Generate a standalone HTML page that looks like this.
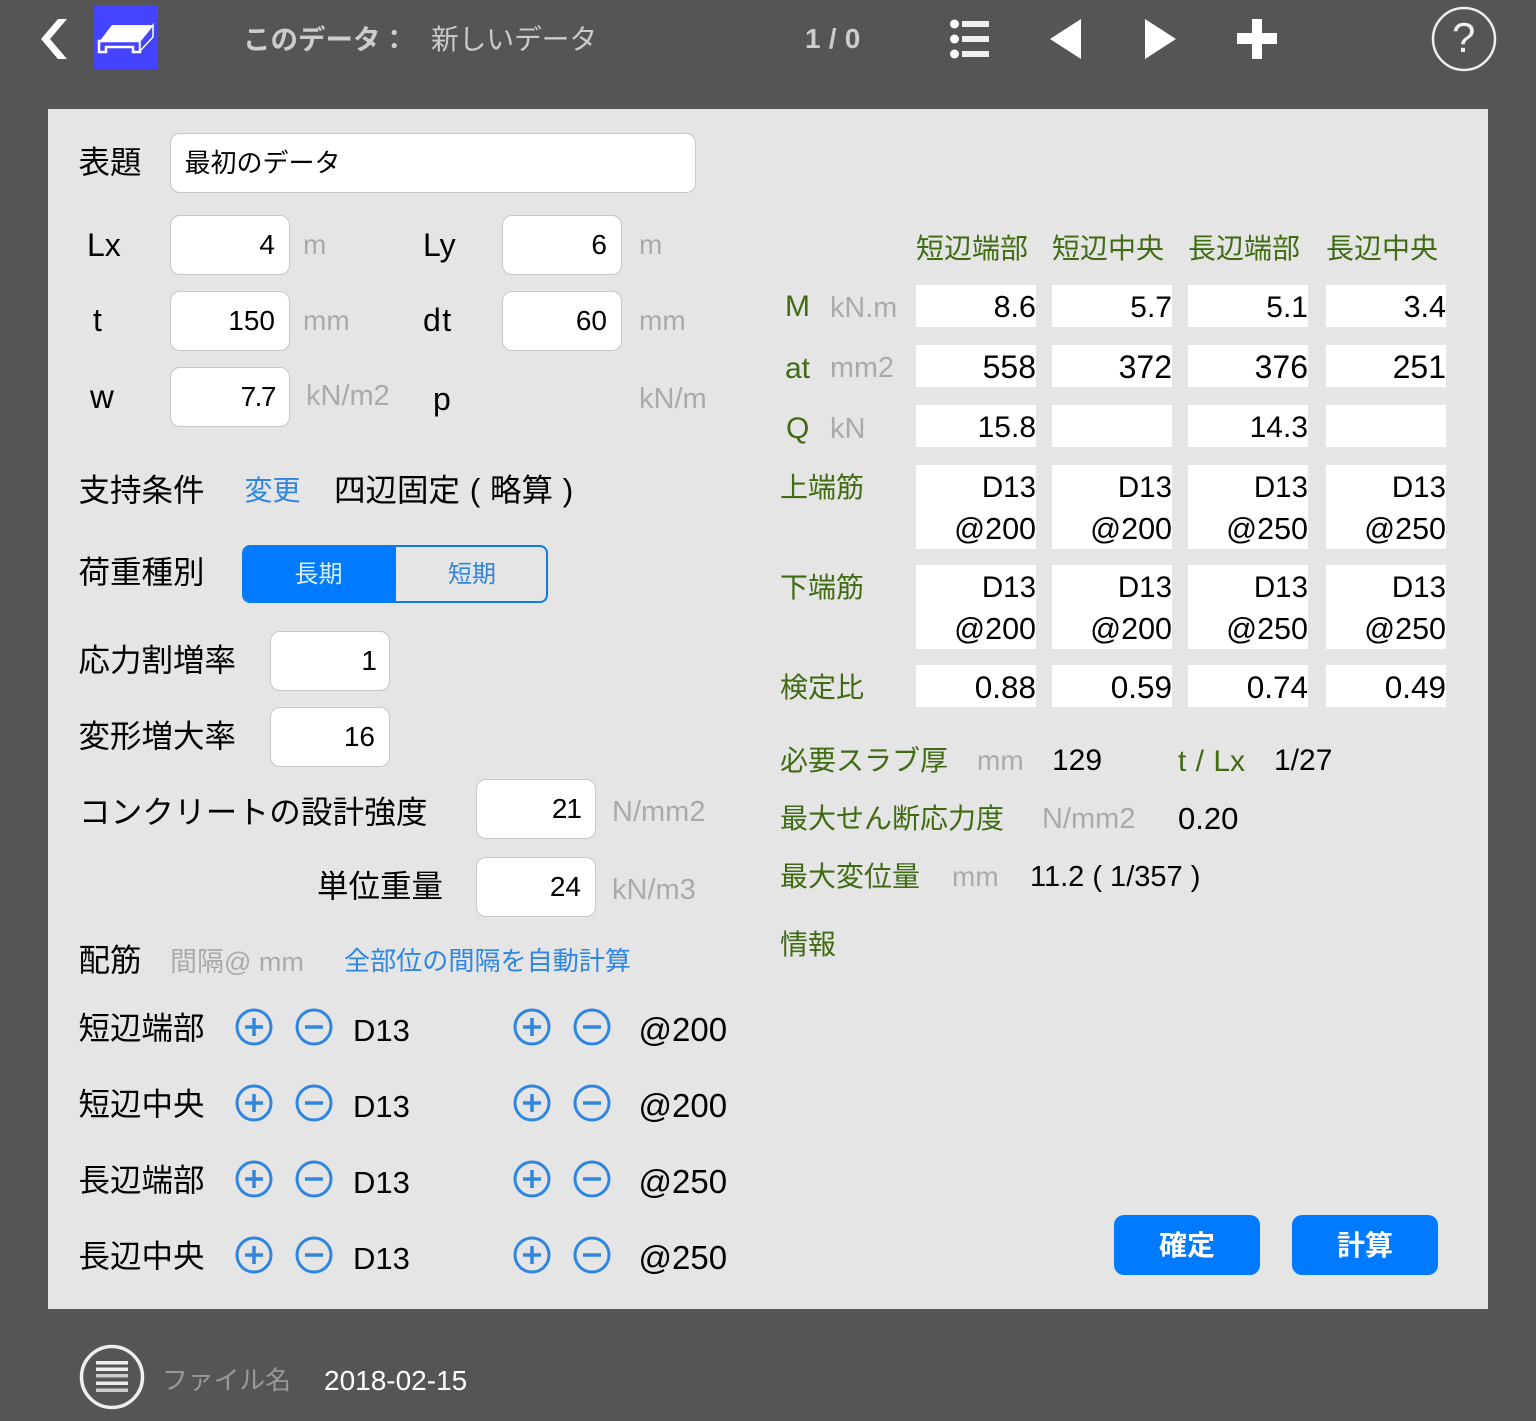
<!DOCTYPE html>
<html lang="ja">
<head>
<meta charset="utf-8">
<title>スラブ計算</title>
<style>
html,body{margin:0;padding:0}
body{position:relative;width:1536px;height:1421px;overflow:hidden;background:#555;font-family:"Liberation Sans","Noto Sans CJK JP",sans-serif;color:#000}
.p{position:absolute;left:48px;top:109px;width:1440px;height:1200px;background:#e5e5e5}
.t{position:absolute;white-space:nowrap;line-height:40px;font-size:31.500px}
.g{color:#3f6b12;font-size:28px;margin-top:.5px}
.u{color:#aaa;font-size:28px}
.b{color:#2e86e0}
.n{font-size:32px}
.w{font-size:33px}
.box{position:absolute;box-sizing:border-box;background:#fff;border:1px solid #c8c8c8;border-radius:10px;width:120px;height:60px;text-align:right;padding-right:14px;line-height:58px;font-size:28px}
.c{position:absolute;box-sizing:border-box;background:#fff;width:120px;text-align:right;font-size:30px;height:42px;line-height:45px}
.c span{display:block;height:42px;line-height:45px;font-size:29.500px}
.c span.a{font-size:30.500px}
.c.d{font-size:32px}
.c.r{font-size:31.500px}
.btn{position:absolute;top:1215px;width:146px;height:60px;background:#007aff;border-radius:10px;color:#fff;font-weight:bold;font-size:28px;text-align:center;line-height:62px}
svg{position:absolute;left:0;top:0}
</style>
</head>
<body>
<div class="p"></div>

<svg width="1536" height="1421" viewBox="0 0 1536 1421">
  <polygon points="58,19 67,19 50,39 67,59 58,59 41,39" fill="#fff"/>
  <rect x="94" y="5" width="64" height="64" fill="#4444ff"/>
  <polygon points="99,42 112,25 153,25 140,42" fill="#fff"/>
  <path d="M99,41V52H106V47H133V52H140V41Z" fill="#4444ff" stroke="#fff" stroke-width="2.500"/>
  <path d="M140,41L153,25V37L140,51Z" fill="#4444ff" stroke="#fff" stroke-width="1.500"/>
  <circle cx="954.500" cy="24" r="4.500" fill="#fff"/><circle cx="954.500" cy="39" r="4.500" fill="#fff"/><circle cx="954.500" cy="54" r="4.500" fill="#fff"/>
  <rect x="962" y="21" width="27" height="6" fill="#f0f0f0"/><rect x="962" y="36" width="27" height="6" fill="#f0f0f0"/><rect x="962" y="51" width="27" height="6" fill="#f0f0f0"/>
  <polygon points="1050,39 1081,19 1081,59" fill="#fff"/>
  <polygon points="1145,19 1176,39 1145,59" fill="#fff"/>
  <rect x="1252" y="19" width="10" height="40" fill="#fff"/><rect x="1237" y="33" width="40" height="11" fill="#fff"/>
  <circle cx="1464" cy="39" r="31" fill="none" stroke="#eee" stroke-width="2.500"/>
  <circle cx="112" cy="1377" r="30.500" fill="none" stroke="#eee" stroke-width="3.500"/>
  <g fill="#eee"><rect x="96" y="1361" width="32" height="3.500"/><rect x="96" y="1367.500" width="32" height="3.500"/><rect x="96" y="1374" width="32" height="3.500" fill="#ccc"/><rect x="96" y="1381.500" width="32" height="3.500"/><rect x="96" y="1388.500" width="32" height="3.500" fill="#ccc"/></g>
  <g fill="none" stroke="#2e86e0" stroke-width="3">
    <circle cx="254" cy="1027" r="17"/><path d="M245,1027H263M254,1018V1036" stroke-width="3.500"/>
    <circle cx="314" cy="1027" r="17"/><path d="M305,1027H323" stroke-width="3.500"/>
    <circle cx="532" cy="1027" r="17"/><path d="M523,1027H541M532,1018V1036" stroke-width="3.500"/>
    <circle cx="592" cy="1027" r="17"/><path d="M583,1027H601" stroke-width="3.500"/>
    <circle cx="254" cy="1103" r="17"/><path d="M245,1103H263M254,1094V1112" stroke-width="3.500"/>
    <circle cx="314" cy="1103" r="17"/><path d="M305,1103H323" stroke-width="3.500"/>
    <circle cx="532" cy="1103" r="17"/><path d="M523,1103H541M532,1094V1112" stroke-width="3.500"/>
    <circle cx="592" cy="1103" r="17"/><path d="M583,1103H601" stroke-width="3.500"/>
    <circle cx="254" cy="1179" r="17"/><path d="M245,1179H263M254,1170V1188" stroke-width="3.500"/>
    <circle cx="314" cy="1179" r="17"/><path d="M305,1179H323" stroke-width="3.500"/>
    <circle cx="532" cy="1179" r="17"/><path d="M523,1179H541M532,1170V1188" stroke-width="3.500"/>
    <circle cx="592" cy="1179" r="17"/><path d="M583,1179H601" stroke-width="3.500"/>
    <circle cx="254" cy="1255" r="17"/><path d="M245,1255H263M254,1246V1264" stroke-width="3.500"/>
    <circle cx="314" cy="1255" r="17"/><path d="M305,1255H323" stroke-width="3.500"/>
    <circle cx="532" cy="1255" r="17"/><path d="M523,1255H541M532,1246V1264" stroke-width="3.500"/>
    <circle cx="592" cy="1255" r="17"/><path d="M583,1255H601" stroke-width="3.500"/>
  </g>
</svg>

<div class="t" style="left:1452px;top:18px;font-size:42px;color:#eee">?</div>
<div class="t" style="left:243px;top:20px;font-size:27.500px;color:#ccc;font-weight:bold">このデータ：</div>
<div class="t" style="left:431px;top:20px;font-size:27.700px;color:#ccc">新しいデータ</div>
<div class="t" style="left:805px;top:19px;font-size:28px;color:#ccc;font-weight:bold;letter-spacing:.2px">1 / 0</div>

<div class="t" style="left:78.500px;top:142px">表題</div>
<div class="box" style="left:170px;top:133px;width:526px;text-align:left;padding:0 0 0 13.500px;font-size:26px">最初のデータ</div>

<div class="t n" style="left:87px;top:225px">Lx</div>
<div class="box" style="left:170px;top:215px">4</div>
<div class="t u" style="left:303px;top:225px">m</div>
<div class="t n" style="left:423px;top:225px">Ly</div>
<div class="box" style="left:502px;top:215px">6</div>
<div class="t u" style="left:639px;top:225px">m</div>

<div class="t n" style="left:93px;top:300px">t</div>
<div class="box" style="left:170px;top:291px">150</div>
<div class="t u" style="left:303px;top:301px">mm</div>
<div class="t n" style="left:423px;top:300px;letter-spacing:1.500px">dt</div>
<div class="box" style="left:502px;top:291px">60</div>
<div class="t u" style="left:639px;top:301px">mm</div>

<div class="t n" style="left:90px;top:377px;font-size:33px">w</div>
<div class="box" style="left:170px;top:367px;letter-spacing:-1.500px">7.7</div>
<div class="t u" style="left:306px;top:376px;font-size:29px">kN/m2</div>
<div class="t n" style="left:433px;top:379px">p</div>
<div class="t u" style="left:639px;top:379px;font-size:29px">kN/m</div>

<div class="t" style="left:78.500px;top:470px">支持条件</div>
<div class="t b" style="left:244.500px;top:471px;font-size:28px">変更</div>
<div class="t" style="left:334px;top:470px;word-spacing:1px">四辺固定 ( 略算 )</div>

<div class="t" style="left:78.500px;top:552px">荷重種別</div>
<div style="position:absolute;box-sizing:border-box;left:242px;top:545px;width:306px;height:58px;border:2px solid #0a7cf0;border-radius:8px;overflow:hidden">
  <div style="position:absolute;left:0;top:0;width:152px;height:54px;background:#007aff;color:#dcecff;text-align:center;line-height:56px;font-size:24px;text-indent:-3px">長期</div>
  <div style="position:absolute;left:152px;top:0;width:150px;height:54px;color:#2e86e0;text-align:center;line-height:56px;font-size:24px;text-indent:2px">短期</div>
</div>

<div class="t" style="left:78.500px;top:640px">応力割増率</div>
<div class="box" style="left:270px;top:631px;padding-right:12px">1</div>
<div class="t" style="left:78.500px;top:716px">変形増大率</div>
<div class="box" style="left:270px;top:707px">16</div>
<div class="t" style="left:79px;top:792px;letter-spacing:.2px">コンクリートの設計強度</div>
<div class="box" style="left:476px;top:779px;letter-spacing:-1px">21</div>
<div class="t u" style="left:612px;top:792px;font-size:29px">N/mm2</div>
<div class="t" style="left:317px;top:866px">単位重量</div>
<div class="box" style="left:476px;top:857px">24</div>
<div class="t u" style="left:612px;top:870px;font-size:29px">kN/m3</div>

<div class="t" style="left:78.500px;top:940px">配筋</div>
<div class="t u" style="left:170px;top:942px;font-size:27px">間隔@ mm</div>
<div class="t b" style="left:344px;top:941px;font-size:26.100px">全部位の間隔を自動計算</div>

<div class="t" style="left:78.500px;top:1008px">短辺端部</div>
<div class="t" style="left:353px;top:1011px;font-size:31px">D13</div>
<div class="t w" style="left:638.500px;top:1010px">@200</div>
<div class="t" style="left:78.500px;top:1084px">短辺中央</div>
<div class="t" style="left:353px;top:1087px;font-size:31px">D13</div>
<div class="t w" style="left:638.500px;top:1086px">@200</div>
<div class="t" style="left:78.500px;top:1160px">長辺端部</div>
<div class="t" style="left:353px;top:1163px;font-size:31px">D13</div>
<div class="t w" style="left:638.500px;top:1162px">@250</div>
<div class="t" style="left:78.500px;top:1236px">長辺中央</div>
<div class="t" style="left:353px;top:1239px;font-size:31px">D13</div>
<div class="t w" style="left:638.500px;top:1238px">@250</div>

<div class="t g" style="left:916px;top:228px">短辺端部</div>
<div class="t g" style="left:1052px;top:228px">短辺中央</div>
<div class="t g" style="left:1188px;top:228px">長辺端部</div>
<div class="t g" style="left:1326px;top:228px">長辺中央</div>

<div class="t g" style="left:785px;top:286px;font-size:30px">M</div>
<div class="t u" style="left:830px;top:288px;font-size:28.800px">kN.m</div>
<div class="t g" style="left:785px;top:348px;font-size:30px">at</div>
<div class="t u" style="left:830px;top:348px;font-size:28.800px">mm2</div>
<div class="t g" style="left:786px;top:408px;font-size:30px">Q</div>
<div class="t u" style="left:830px;top:409px;font-size:29px">kN</div>
<div class="t g" style="left:780px;top:467px">上端筋</div>
<div class="t g" style="left:780px;top:567px">下端筋</div>
<div class="t g" style="left:780px;top:667px">検定比</div>

<div class="c" style="left:916px;top:285px;font-size:30.500px">8.6</div><div class="c" style="left:1052px;top:285px">5.7</div><div class="c" style="left:1188px;top:285px">5.1</div><div class="c" style="left:1326px;top:285px;font-size:30.500px">3.4</div>
<div class="c d" style="left:916px;top:345px">558</div><div class="c d" style="left:1052px;top:345px">372</div><div class="c d" style="left:1188px;top:345px">376</div><div class="c d" style="left:1326px;top:345px">251</div>
<div class="c" style="left:916px;top:405px">15.8</div><div class="c" style="left:1052px;top:405px"></div><div class="c" style="left:1188px;top:405px">14.3</div><div class="c" style="left:1326px;top:405px"></div>
<div class="c" style="left:916px;top:465px;height:84px"><span>D13</span><span class="a">@200</span></div><div class="c" style="left:1052px;top:465px;height:84px"><span>D13</span><span class="a">@200</span></div><div class="c" style="left:1188px;top:465px;height:84px"><span>D13</span><span class="a">@250</span></div><div class="c" style="left:1326px;top:465px;height:84px"><span>D13</span><span class="a">@250</span></div>
<div class="c" style="left:916px;top:565px;height:84px"><span>D13</span><span class="a">@200</span></div><div class="c" style="left:1052px;top:565px;height:84px"><span>D13</span><span class="a">@200</span></div><div class="c" style="left:1188px;top:565px;height:84px"><span>D13</span><span class="a">@250</span></div><div class="c" style="left:1326px;top:565px;height:84px"><span>D13</span><span class="a">@250</span></div>
<div class="c r" style="left:916px;top:665px">0.88</div><div class="c r" style="left:1052px;top:665px">0.59</div><div class="c r" style="left:1188px;top:665px">0.74</div><div class="c r" style="left:1326px;top:665px">0.49</div>

<div class="t g" style="left:780px;top:740px">必要スラブ厚</div>
<div class="t u" style="left:977px;top:741px">mm</div>
<div class="t" style="left:1052px;top:741px;font-size:30px">129</div>
<div class="t g" style="left:1178px;top:741px;font-size:30px;word-spacing:1px">t / Lx</div>
<div class="t" style="left:1274px;top:741px;font-size:30px">1/27</div>
<div class="t g" style="left:780px;top:798px">最大せん断応力度</div>
<div class="t u" style="left:1042px;top:799px;font-size:29px">N/mm2</div>
<div class="t" style="left:1178px;top:799px;font-size:31px">0.20</div>
<div class="t g" style="left:780px;top:856px">最大変位量</div>
<div class="t u" style="left:952px;top:857px">mm</div>
<div class="t" style="left:1030px;top:857px;font-size:29px">11.2 ( 1/357 )</div>
<div class="t g" style="left:780px;top:924px">情報</div>

<div class="btn" style="left:1114px">確定</div>
<div class="btn" style="left:1292px">計算</div>

<div class="t" style="left:162px;top:1361px;font-size:25.800px;color:#999">ファイル名</div>
<div class="t" style="left:324px;top:1361px;font-size:28px;color:#fff">2018-02-15</div>
</body>
</html>
